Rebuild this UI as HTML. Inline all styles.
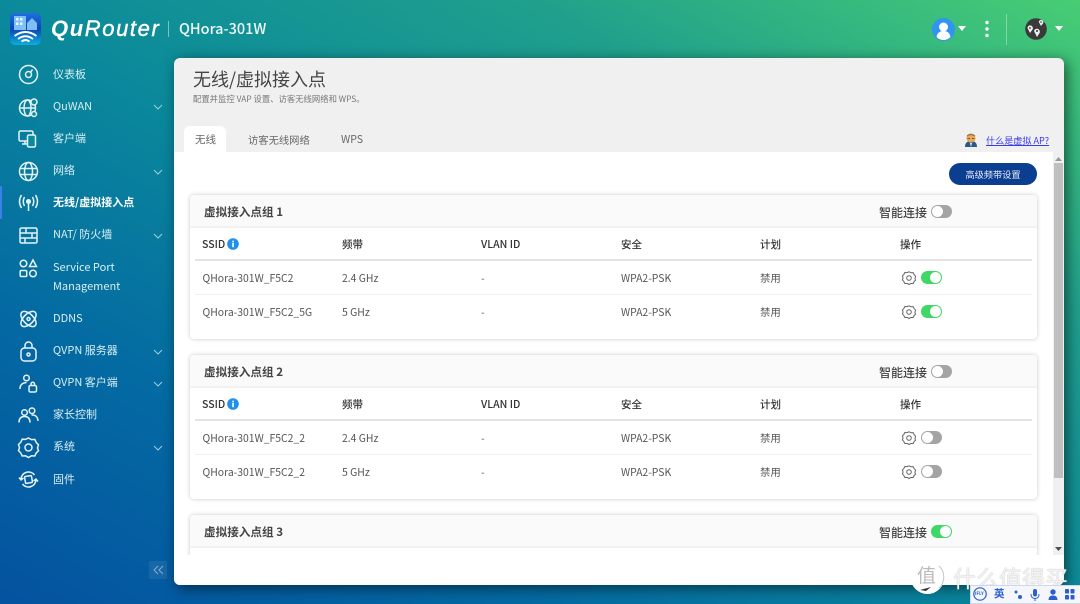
<!DOCTYPE html>
<html lang="zh"><head><meta charset="utf-8"><title>QuRouter</title>
<style>
*{box-sizing:border-box;margin:0;padding:0}
html,body{width:1080px;height:604px;overflow:hidden}
body{position:relative;font-family:"Noto Sans CJK SC","Liberation Sans",sans-serif;background:linear-gradient(to bottom left,#48cd74 0%,#1f9f8c 26%,#0b8a9b 50%,#046aa2 75%,#0452a0 100%)}
.a{position:absolute;white-space:nowrap}
svg{position:absolute;overflow:visible}
.nav{position:absolute;left:53px;font-size:11px;line-height:16px;color:#d8eef2;white-space:nowrap}
.ic{fill:none;stroke:#e4f3f5;stroke-width:1.5}
.chev{fill:none;stroke:#9fd0d8;stroke-width:1}
.panel{position:absolute;left:174px;top:58px;width:890px;height:527px;background:#f0f0f0;border-radius:6px;box-shadow:3px 3px 14px rgba(0,0,0,.55)}
.white{position:absolute;left:174px;top:152px;width:879px;height:403px;background:#fff}
.bottom{position:absolute;left:174px;top:555px;width:890px;height:30px;background:#fff;border-radius:0 0 6px 6px}
.card{position:absolute;left:190px;width:847px;background:#fff;border-radius:4px;box-shadow:0 0 4px rgba(0,0,0,.22)}
.chd{position:absolute;left:0;top:0;width:100%;height:33px;background:#fafafa;border-radius:4px 4px 0 0;border-bottom:2px solid #f2f2f2}
.t{position:absolute;font-size:10.400px;line-height:14px;color:#555;white-space:nowrap}
.h{position:absolute;font-size:10.500px;line-height:14px;color:#333;font-weight:500;white-space:nowrap}
.gt{position:absolute;font-size:11.600px;font-weight:700;color:#444;line-height:16px;white-space:nowrap}
.sl{position:absolute;font-size:12px;font-weight:500;color:#444;line-height:16px;white-space:nowrap}
.tg{position:absolute;width:21px;height:13px;border-radius:7px;background:#a4a4a4}
.tg:after{content:"";position:absolute;left:1px;top:1px;width:11px;height:11px;border-radius:50%;background:#fff}
.tg.on{background:#3fd765}
.tg.on:after{left:9px}
.ln{position:absolute;left:5px;width:837px}
</style></head><body>

<!-- logo -->
<svg style="left:10px;top:13px" width="31" height="32" viewBox="0 0 31 32">
<defs><linearGradient id="lg" x1="0" y1="0" x2="0" y2="1"><stop offset="0" stop-color="#1f6fe0"/><stop offset=".5" stop-color="#0a45b8"/><stop offset="1" stop-color="#0bb0dc"/></linearGradient></defs>
<rect width="31" height="32" rx="5" fill="url(#lg)"/>
<path d="M4 3h12v14H4zM17 10l5-5 5 5v7H17z" fill="#7fc0f4"/>
<path d="M6 5h2.500v2.500H6zM10 5h2.500v2.500H10zM6 9.500h2.500V12H6zM10 9.500h2.500V12H10z" fill="#e8f6ff"/>
<path d="M4.500 23q11-8 22 0M8 26q7.500-5.500 15 0M11.500 28.500q4-3 8 0" fill="none" stroke="#fff" stroke-width="1.900"/>
</svg>
<div class="a" style="left:51px;top:14px;font-family:'Liberation Sans',sans-serif;font-size:22px;line-height:30px;font-style:italic;color:#fff;letter-spacing:1.600px"><b>Qu</b><span style="-webkit-text-stroke:.4px #fff">Router</span></div>
<div class="a" style="left:168px;top:21px;width:1px;height:16px;background:rgba(255,255,255,.45)"></div>
<div class="a" style="left:179px;top:18px;font-size:14.500px;line-height:22px;font-weight:500;color:#f0fafa">QHora-301W</div>

<!-- top right -->
<svg style="left:932px;top:18px" width="23" height="23" viewBox="0 0 23 23"><circle cx="11.500" cy="11.500" r="11.500" fill="#2f95f0"/><circle cx="11.500" cy="9" r="4.500" fill="#fff"/><path d="M4.500 19q1-6 7-6t7 6q-3 3-7 3t-7-3z" fill="#fff"/></svg>
<svg style="left:958px;top:26px" width="9" height="6"><path d="M0 0h8L4 5z" fill="#fff"/></svg>
<svg style="left:984px;top:20px" width="6" height="18"><circle cx="3" cy="2.500" r="1.700" fill="#fff"/><circle cx="3" cy="9" r="1.700" fill="#fff"/><circle cx="3" cy="15.500" r="1.700" fill="#fff"/></svg>
<div class="a" style="left:1006px;top:14px;width:1px;height:31px;background:rgba(255,255,255,.35)"></div>
<svg style="left:1025px;top:18px" width="22" height="22" viewBox="0 0 22 22"><circle cx="11" cy="11" r="10.800" fill="#3a3a3a"/><path d="M2.500 10a2.700 2.700 0 1 1 5 1.500L5 15z" fill="#eee"/><path d="M13.800 4a2.300 2.300 0 1 1 4.300 1.300L16 8z" fill="#eee"/><path d="M9 13a3 3 0 1 1 5.800 1.600L12 19z" fill="#eee"/><circle cx="12" cy="13" r="1" fill="#333"/><circle cx="16" cy="4" r=".8" fill="#333"/><circle cx="5" cy="10" r=".9" fill="#333"/></svg>
<svg style="left:1055px;top:26px" width="9" height="6"><path d="M0 0h8L4 5z" fill="#fff"/></svg>

<!-- nav -->
<div class="a" style="left:0;top:186px;width:2px;height:33px;background:#3d7fe8"></div>
<svg style="left:18px;top:64px" width="21" height="21" viewBox="0 0 21 21" class="ic"><circle cx="10.500" cy="10.500" r="9"/><circle cx="10.500" cy="10.500" r="3"/><path d="M12.500 8.500l2-3"/></svg>
<div class="nav" style="top:66px">仪表板</div>
<svg style="left:18px;top:97px" width="21" height="21" viewBox="0 0 21 21" class="ic"><circle cx="9.500" cy="11" r="8"/><ellipse cx="9.500" cy="11" rx="3.500" ry="8"/><path d="M1.500 11h16"/><circle cx="16" cy="5" r="3" fill="#0a8a9c"/><circle cx="16" cy="17" r="2.500" fill="#0a8a9c"/></svg>
<div class="nav" style="top:98px">QuWAN</div>
<svg style="left:18px;top:129px" width="21" height="20" viewBox="0 0 21 20" class="ic"><rect x="1" y="2" width="14" height="10" rx="1.500"/><path d="M4 15h6M7 12v3"/><rect x="9.500" y="6" width="8" height="12" rx="1.500" fill="#0a8a9c"/></svg>
<div class="nav" style="top:130px">客户端</div>
<svg style="left:18px;top:161px" width="21" height="21" viewBox="0 0 21 21" class="ic"><circle cx="10.500" cy="10.500" r="9"/><ellipse cx="10.500" cy="10.500" rx="4" ry="9"/><path d="M2 7.500h17M2 13.500h17"/></svg>
<div class="nav" style="top:162px">网络</div>
<svg style="left:18px;top:193px" width="21" height="20" viewBox="0 0 21 20" class="ic"><circle cx="10.500" cy="8.500" r="1.800" fill="#e4f3f5"/><path d="M10.500 10v8M6.500 13q-2.500-4.500 0-9M14.500 13q2.500-4.500 0-9M3.500 15q-4-6.500 0-13M17.500 15q4-6.500 0-13"/></svg>
<div class="nav" style="top:194px;font-weight:700;color:#fff">无线/虚拟接入点</div>
<svg style="left:19px;top:227px" width="19" height="17" viewBox="0 0 19 17" class="ic"><rect x="1" y="1" width="17" height="15" rx="1.500"/><path d="M1 6h17M1 11h17M7 1v5M13 6v5M6 11v5"/></svg>
<div class="nav" style="top:226px">NAT/ 防火墙</div>
<svg style="left:19px;top:259px" width="19" height="19" viewBox="0 0 19 19" class="ic"><circle cx="4.500" cy="4.500" r="3.300"/><path d="M14 1l3.500 6.500h-7z"/><rect x="1.200" y="11.500" width="6.500" height="6" rx="1"/><circle cx="14" cy="14.500" r="3.300"/></svg>
<div class="nav" style="top:258px;line-height:19px">Service Port<br>Management</div>
<svg style="left:18px;top:309px" width="21" height="20" viewBox="0 0 21 20" class="ic"><ellipse cx="10.500" cy="10" rx="9.500" ry="5" transform="rotate(45 10.500 10)"/><ellipse cx="10.500" cy="10" rx="9.500" ry="5" transform="rotate(-45 10.500 10)"/><circle cx="10.500" cy="10" r="1.500"/></svg>
<div class="nav" style="top:310px">DDNS</div>
<svg style="left:20px;top:341px" width="17" height="21" viewBox="0 0 17 21" class="ic"><rect x="1" y="7" width="15" height="13" rx="3.500"/><path d="M5 7V4.500a3.500 3.500 0 0 1 7 0V7"/><circle cx="8.500" cy="13.500" r="1.500"/></svg>
<div class="nav" style="top:342px">QVPN 服务器</div>
<svg style="left:19px;top:374px" width="19" height="19" viewBox="0 0 19 19" class="ic"><circle cx="7.500" cy="4" r="2.800"/><path d="M1 15q0-6 6.500-6.500"/><rect x="10" y="11.500" width="7.500" height="6.500" rx="1.500"/><path d="M12 11.500v-1.500a1.700 1.700 0 0 1 3.500 0v1.500"/></svg>
<div class="nav" style="top:374px">QVPN 客户端</div>
<svg style="left:18px;top:407px" width="21" height="17" viewBox="0 0 21 17" class="ic"><circle cx="6.500" cy="5.500" r="2.800"/><circle cx="14" cy="3.800" r="2.800"/><path d="M1 15.500q0-6 5.500-6t5.500 6M13.500 8q6-.5 6.500 6"/></svg>
<div class="nav" style="top:406px">家长控制</div>
<svg style="left:18px;top:437px" width="21" height="21" viewBox="0 0 21 21" class="ic"><path d="M10.500 1l3 1.600 3.300-.2 1.400 3 2.300 2.400-1 3.200 1 2.800-2.300 2.200-1.400 3-3.300-.2-3 1.700-3-1.700-3.300.2-1.400-3L.5 13.600l1-2.800-1-3.200 2.300-2.400 1.400-3 3.300.2z"/><circle cx="10.500" cy="10.500" r="3.500"/></svg>
<div class="nav" style="top:438px">系统</div>
<svg style="left:18px;top:470px" width="21" height="19" viewBox="0 0 21 19" class="ic"><path d="M3 9.500a7.500 7.500 0 0 1 13.500-4.500M18 9.500a7.500 7.500 0 0 1-13.500 4.500M1 7.500l2 2.500 2.500-2M20 11.500l-2-2.500-2.500 2"/><rect x="7" y="6" width="7" height="7" rx="1" transform="rotate(-10 10.500 9.500)"/></svg>
<div class="nav" style="top:471px">固件</div>

<svg class="chev" style="left:153px;top:104px" width="10" height="6"><path d="M1 1l4 4 4-4"/></svg>
<svg class="chev" style="left:153px;top:169px" width="10" height="6"><path d="M1 1l4 4 4-4"/></svg>
<svg class="chev" style="left:153px;top:233px" width="10" height="6"><path d="M1 1l4 4 4-4"/></svg>
<svg class="chev" style="left:153px;top:349px" width="10" height="6"><path d="M1 1l4 4 4-4"/></svg>
<svg class="chev" style="left:153px;top:381px" width="10" height="6"><path d="M1 1l4 4 4-4"/></svg>
<svg class="chev" style="left:153px;top:445px" width="10" height="6"><path d="M1 1l4 4 4-4"/></svg>

<div class="a" style="left:149px;top:561px;width:18px;height:18px;border-radius:2px;background:rgba(255,255,255,.08)"></div>
<svg style="left:153px;top:566px" width="11" height="8" fill="none" stroke="#7fb0cc" stroke-width="1"><path d="M5 0L1 4l4 4M10 0L6 4l4 4"/></svg>

<!-- panel -->
<div class="panel"></div>
<div class="white"></div>
<div class="bottom"></div>
<div class="a" style="left:193px;top:66px;font-size:18px;line-height:26px;color:#444">无线/虚拟接入点</div>
<div class="a" style="left:193px;top:93px;font-size:8.350px;line-height:13px;color:#777">配置并监控 VAP 设置、访客无线网络和 WPS。</div>
<div class="a" style="left:184px;top:126px;width:42px;height:26px;background:#fff;border-radius:6px 6px 0 0"></div>
<div class="a" style="left:195px;top:132px;font-size:10.500px;line-height:15px;color:#666">无线</div>
<div class="a" style="left:248px;top:132px;font-size:10.300px;line-height:15px;color:#666">访客无线网络</div>
<div class="a" style="left:341px;top:132px;font-size:10.500px;line-height:15px;color:#666">WPS</div>
<svg style="left:964px;top:133px" width="14" height="14" viewBox="0 0 14 14"><path d="M1 14q0-6 6-6t6 6z" fill="#2a5a8a"/><circle cx="7" cy="5" r="4.600" fill="#e8aa58"/><path d="M3 3q4-3 8 0" fill="none" stroke="#8a7a5a" stroke-width="1.300"/><path d="M3.500 5.500h2.500M8 5.500h2.500" stroke="#7a5a30" stroke-width="1"/><path d="M6 10h2l-1 4z" fill="#eee"/></svg>
<div class="a" style="left:986px;top:133px;font-size:9.100px;line-height:14px;color:#3a3af0;text-decoration:underline">什么是虚拟 AP?</div>

<div class="a" style="left:949px;top:163px;width:88px;height:22px;border-radius:11px;background:#0b3d91;color:#e8eef8;font-size:9.200px;line-height:22px;text-align:center">高级频带设置</div>

<!-- scrollbar -->
<div class="a" style="left:1053px;top:152px;width:11px;height:403px;background:#f0f0f0"></div>
<div class="a" style="left:1054px;top:163px;width:9px;height:315px;background:#c0c0c0"></div>
<svg style="left:1055px;top:157px" width="7" height="4"><path d="M0 4h7L3.500 0z" fill="#9a9a9a"/></svg>
<svg style="left:1055px;top:547px" width="7" height="4"><path d="M0 0h7L3.500 4z" fill="#505050"/></svg>

<!-- card 1 -->
<div class="card" style="top:195px;height:144px">
<div class="chd"></div>
<div class="gt" style="left:14px;top:9px">虚拟接入点组 1</div>
<div class="sl" style="left:689px;top:10px">智能连接</div>
<div class="tg" style="left:741px;top:10px"></div>
<div class="h" style="left:12px;top:43px">SSID</div>
<svg style="left:37px;top:43px" width="12" height="12"><circle cx="6" cy="6" r="5.800" fill="#1e90ef"/><rect x="5.200" y="5" width="1.700" height="4.200" fill="#fff"/><rect x="5.200" y="2.700" width="1.700" height="1.600" fill="#fff"/></svg>
<div class="h" style="left:152px;top:43px">频带</div>
<div class="h" style="left:291px;top:43px">VLAN ID</div>
<div class="h" style="left:431px;top:43px">安全</div>
<div class="h" style="left:570px;top:43px">计划</div>
<div class="h" style="left:710px;top:43px">操作</div>
<div class="ln" style="top:64px;height:2px;background:#e2e4e8"></div>
<div class="t" style="left:12.500px;top:76px">QHora-301W_F5C2</div><div class="t" style="left:152px;top:76px">2.4 GHz</div><div class="t" style="left:291px;top:76px">-</div><div class="t" style="left:431px;top:76px">WPA2-PSK</div><div class="t" style="left:570px;top:76px">禁用</div>
<svg style="left:712px;top:76px" width="14" height="14" viewBox="0 0 14 14" fill="none" stroke="#666" stroke-width="1"><path d="M7 .8l2 1 2.200-.1.900 1.900 1.500 1.600-.7 2.100.7 1.800-1.500 1.500-.9 1.900-2.200-.1-2 1.100-2-1.100-2.200.1-.9-1.900L.4 8.900l.7-1.800-.7-2.100 1.500-1.600.9-1.900 2.200.1z"/><circle cx="7" cy="7" r="2.300"/></svg>
<div class="tg on" style="left:731px;top:76px"></div>
<div class="ln" style="top:99px;height:1px;background:#f0f0f0"></div>
<div class="t" style="left:12.500px;top:110px">QHora-301W_F5C2_5G</div><div class="t" style="left:152px;top:110px">5 GHz</div><div class="t" style="left:291px;top:110px">-</div><div class="t" style="left:431px;top:110px">WPA2-PSK</div><div class="t" style="left:570px;top:110px">禁用</div>
<svg style="left:712px;top:110px" width="14" height="14" viewBox="0 0 14 14" fill="none" stroke="#666" stroke-width="1"><path d="M7 .8l2 1 2.200-.1.900 1.900 1.500 1.600-.7 2.100.7 1.800-1.500 1.500-.9 1.900-2.200-.1-2 1.100-2-1.100-2.200.1-.9-1.900L.4 8.900l.7-1.800-.7-2.100 1.500-1.600.9-1.900 2.200.1z"/><circle cx="7" cy="7" r="2.300"/></svg>
<div class="tg on" style="left:731px;top:110px"></div>
</div>

<!-- card 2 -->
<div class="card" style="top:355px;height:144px">
<div class="chd"></div>
<div class="gt" style="left:14px;top:9px">虚拟接入点组 2</div>
<div class="sl" style="left:689px;top:10px">智能连接</div>
<div class="tg" style="left:741px;top:10px"></div>
<div class="h" style="left:12px;top:43px">SSID</div>
<svg style="left:37px;top:43px" width="12" height="12"><circle cx="6" cy="6" r="5.800" fill="#1e90ef"/><rect x="5.200" y="5" width="1.700" height="4.200" fill="#fff"/><rect x="5.200" y="2.700" width="1.700" height="1.600" fill="#fff"/></svg>
<div class="h" style="left:152px;top:43px">频带</div>
<div class="h" style="left:291px;top:43px">VLAN ID</div>
<div class="h" style="left:431px;top:43px">安全</div>
<div class="h" style="left:570px;top:43px">计划</div>
<div class="h" style="left:710px;top:43px">操作</div>
<div class="ln" style="top:64px;height:2px;background:#e2e4e8"></div>
<div class="t" style="left:12.500px;top:76px">QHora-301W_F5C2_2</div><div class="t" style="left:152px;top:76px">2.4 GHz</div><div class="t" style="left:291px;top:76px">-</div><div class="t" style="left:431px;top:76px">WPA2-PSK</div><div class="t" style="left:570px;top:76px">禁用</div>
<svg style="left:712px;top:76px" width="14" height="14" viewBox="0 0 14 14" fill="none" stroke="#666" stroke-width="1"><path d="M7 .8l2 1 2.200-.1.900 1.900 1.500 1.600-.7 2.100.7 1.800-1.500 1.500-.9 1.900-2.200-.1-2 1.100-2-1.100-2.200.1-.9-1.900L.4 8.900l.7-1.800-.7-2.100 1.500-1.600.9-1.900 2.200.1z"/><circle cx="7" cy="7" r="2.300"/></svg>
<div class="tg" style="left:731px;top:76px"></div>
<div class="ln" style="top:99px;height:1px;background:#f0f0f0"></div>
<div class="t" style="left:12.500px;top:110px">QHora-301W_F5C2_2</div><div class="t" style="left:152px;top:110px">5 GHz</div><div class="t" style="left:291px;top:110px">-</div><div class="t" style="left:431px;top:110px">WPA2-PSK</div><div class="t" style="left:570px;top:110px">禁用</div>
<svg style="left:712px;top:110px" width="14" height="14" viewBox="0 0 14 14" fill="none" stroke="#666" stroke-width="1"><path d="M7 .8l2 1 2.200-.1.900 1.900 1.500 1.600-.7 2.100.7 1.800-1.500 1.500-.9 1.900-2.200-.1-2 1.100-2-1.100-2.200.1-.9-1.900L.4 8.900l.7-1.800-.7-2.100 1.500-1.600.9-1.900 2.200.1z"/><circle cx="7" cy="7" r="2.300"/></svg>
<div class="tg" style="left:731px;top:110px"></div>
</div>

<!-- card 3 clipped -->
<div class="a" style="left:186px;top:510px;width:860px;height:45px;overflow:hidden">
<div class="card" style="left:4px;top:5px;height:80px">
<div class="chd"></div>
<div class="gt" style="left:14px;top:9px">虚拟接入点组 3</div>
<div class="sl" style="left:689px;top:10px">智能连接</div>
<div class="tg on" style="left:741px;top:10px"></div>
</div></div>

<!-- watermark -->
<svg style="left:910px;top:560px" width="36" height="36"><circle cx="17.500" cy="17" r="17" fill="#fff"/><path d="M29 6a15 15 0 0 1 0 22" fill="none" stroke="#c4c4c4" stroke-width="1"/><path d="M10 30l11-3-5 4z" fill="#333"/></svg>
<div class="a" style="left:917px;top:562px;font-size:19px;line-height:26px;color:#bbb">值</div>
<div class="a" style="left:953px;top:562px;font-size:23px;line-height:30px;color:#f2f2f2;text-shadow:0 0 1px #999">什么值得买</div>

<!-- IME bar -->
<div class="a" style="left:970px;top:585px;width:110px;height:19px;background:#f4f6fc;border:1px solid #cdd8f0;border-right:0"></div>
<svg style="left:973px;top:587px" width="14" height="14"><circle cx="7" cy="7" r="6.200" fill="none" stroke="#2b5fd0" stroke-width="1.200"/></svg>
<div class="a" style="left:975px;top:591px;font-size:4.500px;line-height:6px;color:#2b5fd0;font-weight:700">iFLY</div>
<div class="a" style="left:994px;top:587px;font-size:10.500px;line-height:14px;color:#2b5fd0;font-weight:700">英</div>
<svg style="left:1013px;top:589px" width="62" height="12" fill="#2b5fd0"><circle cx="3" cy="3" r="1.500"/><circle cx="7" cy="8" r="2"/><rect x="20" y="0" width="4" height="7.500" rx="2"/><path d="M18.500 5q0 4 3.500 4t3.500-4h1q0 4.500-4 5v2h-1v-2q-4-.5-4-5z"/><circle cx="40" cy="3" r="2.700"/><path d="M35.500 11q0-4.500 4.500-4.500t4.500 4.500z"/><rect x="52" y="0" width="4" height="4.500" rx=".8"/><rect x="57.500" y="0" width="4" height="4.500" rx=".8"/><rect x="52" y="6" width="4" height="4.500" rx=".8"/><rect x="57.500" y="6" width="4" height="4.500" rx=".8"/></svg>
</body></html>
